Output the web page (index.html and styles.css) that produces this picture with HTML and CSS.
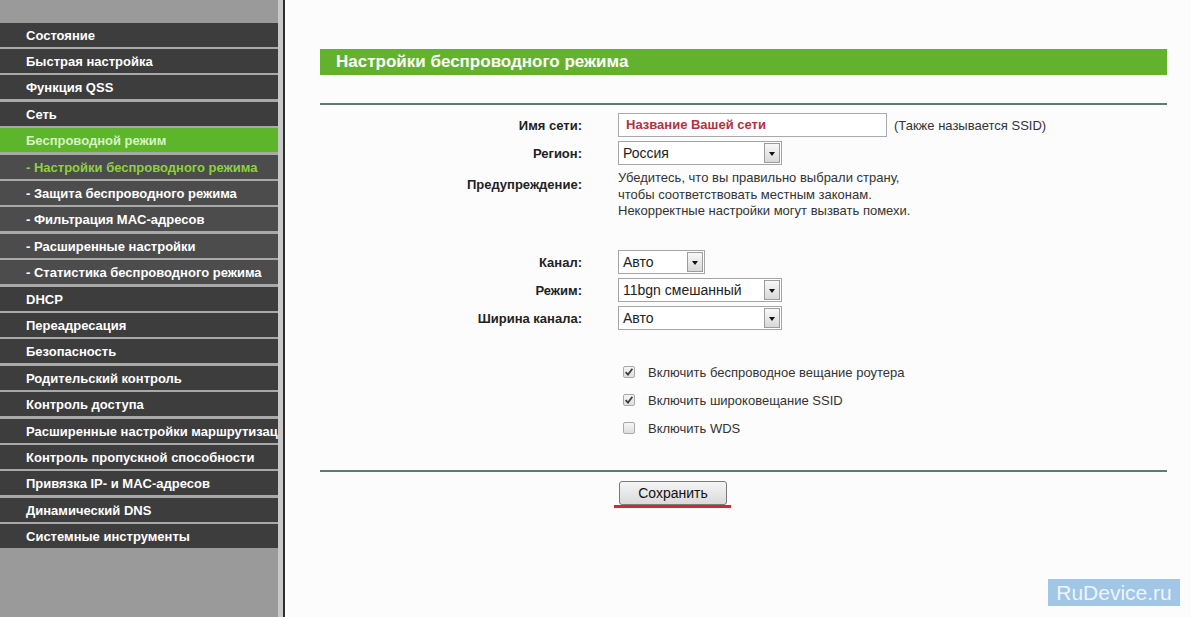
FILE: index.html
```html
<!DOCTYPE html>
<html lang="ru">
<head>
	<meta charset="UTF-8">
	<title>Настройки беспроводного режима</title>
	<link rel="stylesheet" href="styles.css">
</head>
<body>
	<div class="page">
		<!-- левое меню -->
		<div class="sidebar">
			<ul class="menu">
				<li>Состояние</li>
				<li>Быстрая настройка</li>
				<li>Функция QSS</li>
				<li>Сеть</li>
				<li class="active">Беспроводной режим</li>
				<li class="sub current">- Настройки беспроводного режима</li>
				<li class="sub">- Защита беспроводного режима</li>
				<li class="sub">- Фильтрация MAC-адресов</li>
				<li class="sub">- Расширенные настройки</li>
				<li class="sub">- Статистика беспроводного режима</li>
				<li>DHCP</li>
				<li>Переадресация</li>
				<li>Безопасность</li>
				<li>Родительский контроль</li>
				<li>Контроль доступа</li>
				<li>Расширенные настройки маршрутизации</li>
				<li>Контроль пропускной способности</li>
				<li>Привязка IP- и MAC-адресов</li>
				<li>Динамический DNS</li>
				<li>Системные инструменты</li>
			</ul>
		</div>

		<div class="content">
			<h1 class="title">Настройки беспроводного режима</h1>
			<div class="rule"></div>

			<div class="form">
				<div class="row">
					<div class="label">Имя сети:</div>
					<div class="field">
						<div class="input">Название Вашей сети</div>
						<span class="hint">(Также называется SSID)</span>
					</div>
				</div>
				<div class="row">
					<div class="label">Регион:</div>
					<div class="field">
						<div class="select wide"><span>Россия</span><i class="arrow"></i></div>
					</div>
				</div>
				<div class="row warn">
					<div class="label">Предупреждение:</div>
					<div class="field note">
						Убедитесь, что вы правильно выбрали страну,<br>
						чтобы соответствовать местным законам.<br>
						Некорректные настройки могут вызвать помехи.
					</div>
				</div>

				<div class="row channel">
					<div class="label">Канал:</div>
					<div class="field">
						<div class="select short"><span>Авто</span><i class="arrow"></i></div>
					</div>
				</div>
				<div class="row">
					<div class="label">Режим:</div>
					<div class="field">
						<div class="select wide"><span>11bgn смешанный</span><i class="arrow"></i></div>
					</div>
				</div>
				<div class="row">
					<div class="label">Ширина канала:</div>
					<div class="field">
						<div class="select wide"><span>Авто</span><i class="arrow"></i></div>
					</div>
				</div>

				<div class="checks">
					<div class="check on"><i class="box"><svg viewBox="0 0 12 12" width="12" height="12"><path d="M2.6 6.2 L5 8.6 L9.4 2.8"/></svg></i>Включить беспроводное вещание роутера</div>
					<div class="check on"><i class="box"><svg viewBox="0 0 12 12" width="12" height="12"><path d="M2.6 6.2 L5 8.6 L9.4 2.8"/></svg></i>Включить широковещание SSID</div>
					<div class="check"><i class="box"></i>Включить WDS</div>
				</div>
			</div>

			<div class="rule"></div>
			<div class="actions">
				<div class="save">
					<button class="btn">Сохранить</button>
					<div class="mark"></div>
				</div>
			</div>
		</div>
	</div>

	<div class="wm">RuDevice.ru</div>
</body>
</html>
```

FILE: styles.css
```css
*{padding:0;margin:0;box-sizing:border-box;}
body{font-family:"Liberation Sans",Arial,sans-serif;background:#fcfcfc;color:#222;overflow:hidden;}
.page{display:flex;height:617px;}

/* меню слева */
.sidebar{width:285px;flex:none;background:#9a9a9a;padding-top:22.7px;border-right:2px solid #2e2e2e;box-shadow:inset -5px 0 0 #c8c8c8;}
.menu{list-style:none;width:278px;background:#a9a9a9;}
.menu li{height:24px;line-height:26px;margin-bottom:2.4px;padding-left:26px;background:#3d3d3d;color:#fff;font-size:13px;font-weight:bold;white-space:nowrap;overflow:hidden;}
.menu li:last-child{margin-bottom:0;}
.menu li.sub{background:#4c4c4c;font-weight:bold;}
.menu li.active{background:#5db52c;color:#d9f2c6;}
.menu li.current{color:#8fd13f;}

/* правая часть */
.content{flex:1;padding:49px 24px 0 35px;}
.title{height:26px;line-height:26px;background:#63b22f;color:#fff;font-size:17px;font-weight:bold;padding-left:16px;}
.rule{height:2px;background:#5b7d70;margin-top:28px;}

.form{padding-top:8px;font-size:13px;}
.row{display:flex;align-items:center;gap:36px;height:24px;margin-bottom:4px;}
.label{width:262px;text-align:right;font-weight:bold;color:#222;}
.field{display:flex;align-items:center;}

.input{width:269px;height:24px;line-height:22px;border:1px solid #aaa;background:#fff;padding-left:7px;color:#b0323f;font-weight:bold;}
.hint{margin-left:7px;color:#333;}

.select{position:relative;height:24px;line-height:22px;border:1px solid #a5a5a5;background:#fff;padding-left:4px;font-size:14px;color:#222;}
.select.wide{width:164px;}
.select.short{width:87px;}
.select .arrow{position:absolute;right:1px;top:1px;width:16px;height:20px;border:1px solid #9c9c9c;background:linear-gradient(#f8f8f8,#d8d8d8);}
.select .arrow:after{content:"";position:absolute;left:4px;top:8px;border-left:3.5px solid transparent;border-right:3.5px solid transparent;border-top:4px solid #111;}

.row.warn{height:auto;align-items:flex-start;margin-top:0;}
.row.warn .label{padding-top:8px;line-height:16px;}
.note{display:block;font-size:13px;line-height:16.5px;color:#333;padding-top:1px;}
.row.channel{margin-top:30.5px;}

.checks{margin-top:28px;padding-left:298px;}
.check{display:flex;align-items:center;height:28px;color:#333;}
.check .box{width:12px;height:12px;margin:0 13px 0 5px;border:1px solid #a8a8a8;border-radius:2px;background:linear-gradient(#f6f6f6,#dedede);display:flex;}
.check .box svg{display:block;margin:-1px;}
.check .box path{fill:none;stroke:#3a3a3a;stroke-width:1.7;}

.actions{padding:9px 0 0 294px;}
.save{display:inline-block;}
.btn{display:block;margin-left:5px;width:108px;height:24px;border:1px solid #7a7a7a;border-radius:3px;background:linear-gradient(#f5f5f5,#dadada);font-family:inherit;font-size:14px;color:#111;}
.mark{width:117px;height:3px;background:#d0283a;margin-top:0;}

/* водяной знак */
.wm{position:absolute;right:11px;bottom:11px;width:132px;height:27px;line-height:27px;text-align:center;background:#a2c7e6;color:#eef4fb;font-size:21px;}
```
